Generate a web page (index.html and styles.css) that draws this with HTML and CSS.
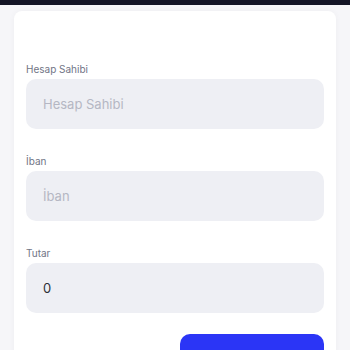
FILE: index.html
```html
<!DOCTYPE html>
<html lang="tr">
<head>
<meta charset="utf-8">
<link rel="stylesheet" href="styles.css">
</head>
<body>
<div class="topbar"></div>
<main class="page">
  <form class="card">
    <div class="field">
      <label class="label" for="owner">Hesap Sahibi</label>
      <input class="input" id="owner" placeholder="Hesap Sahibi">
    </div>
    <div class="field">
      <label class="label" for="iban">İban</label>
      <input class="input" id="iban" placeholder="İban">
    </div>
    <div class="field">
      <label class="label" for="amount">Tutar</label>
      <input class="input" id="amount" value="0">
    </div>
    <div class="actions">
      <button class="btn" type="button">Gönder</button>
    </div>
  </form>
</main>
</body>
</html>
```
FILE: styles.css
```css
* { box-sizing: border-box; }
html, body { margin: 0; padding: 0; }
body {
  background: #f6f6f9;
  font-family: Inter, "Noto Sans", sans-serif;
  overflow: hidden;
  height: 350px;
}
.topbar {
  height: 5px;
  background: #141526;
}
.page {
  padding: 6px 14px 0;
}
.card {
  background: #ffffff;
  border-radius: 8px;
  box-shadow: 0 0 6px rgba(20, 20, 50, 0.04);
  padding: 52px 12px 20px;
  display: flex;
  flex-direction: column;
}
.field {
  display: flex;
  flex-direction: column;
  margin-bottom: 26px;
}
.label {
  font-size: 10px;
  line-height: 12px;
  color: #717586;
  margin-bottom: 4px;
}
.input {
  height: 50px;
  border: none;
  border-radius: 10px;
  background: #eeeff4;
  padding: 0 17px;
  font-family: inherit;
  font-size: 13px;
  color: #2d2f38;
  outline: none;
}
.input::placeholder { color: #b5b7c3; }
.actions {
  display: flex;
  justify-content: flex-end;
  margin-top: -5px;
}
.btn {
  width: 144px;
  height: 50px;
  border: none;
  border-radius: 10px;
  background: #2b35f6;
  color: #fff;
  font-family: inherit;
  font-size: 13px;
}
```
